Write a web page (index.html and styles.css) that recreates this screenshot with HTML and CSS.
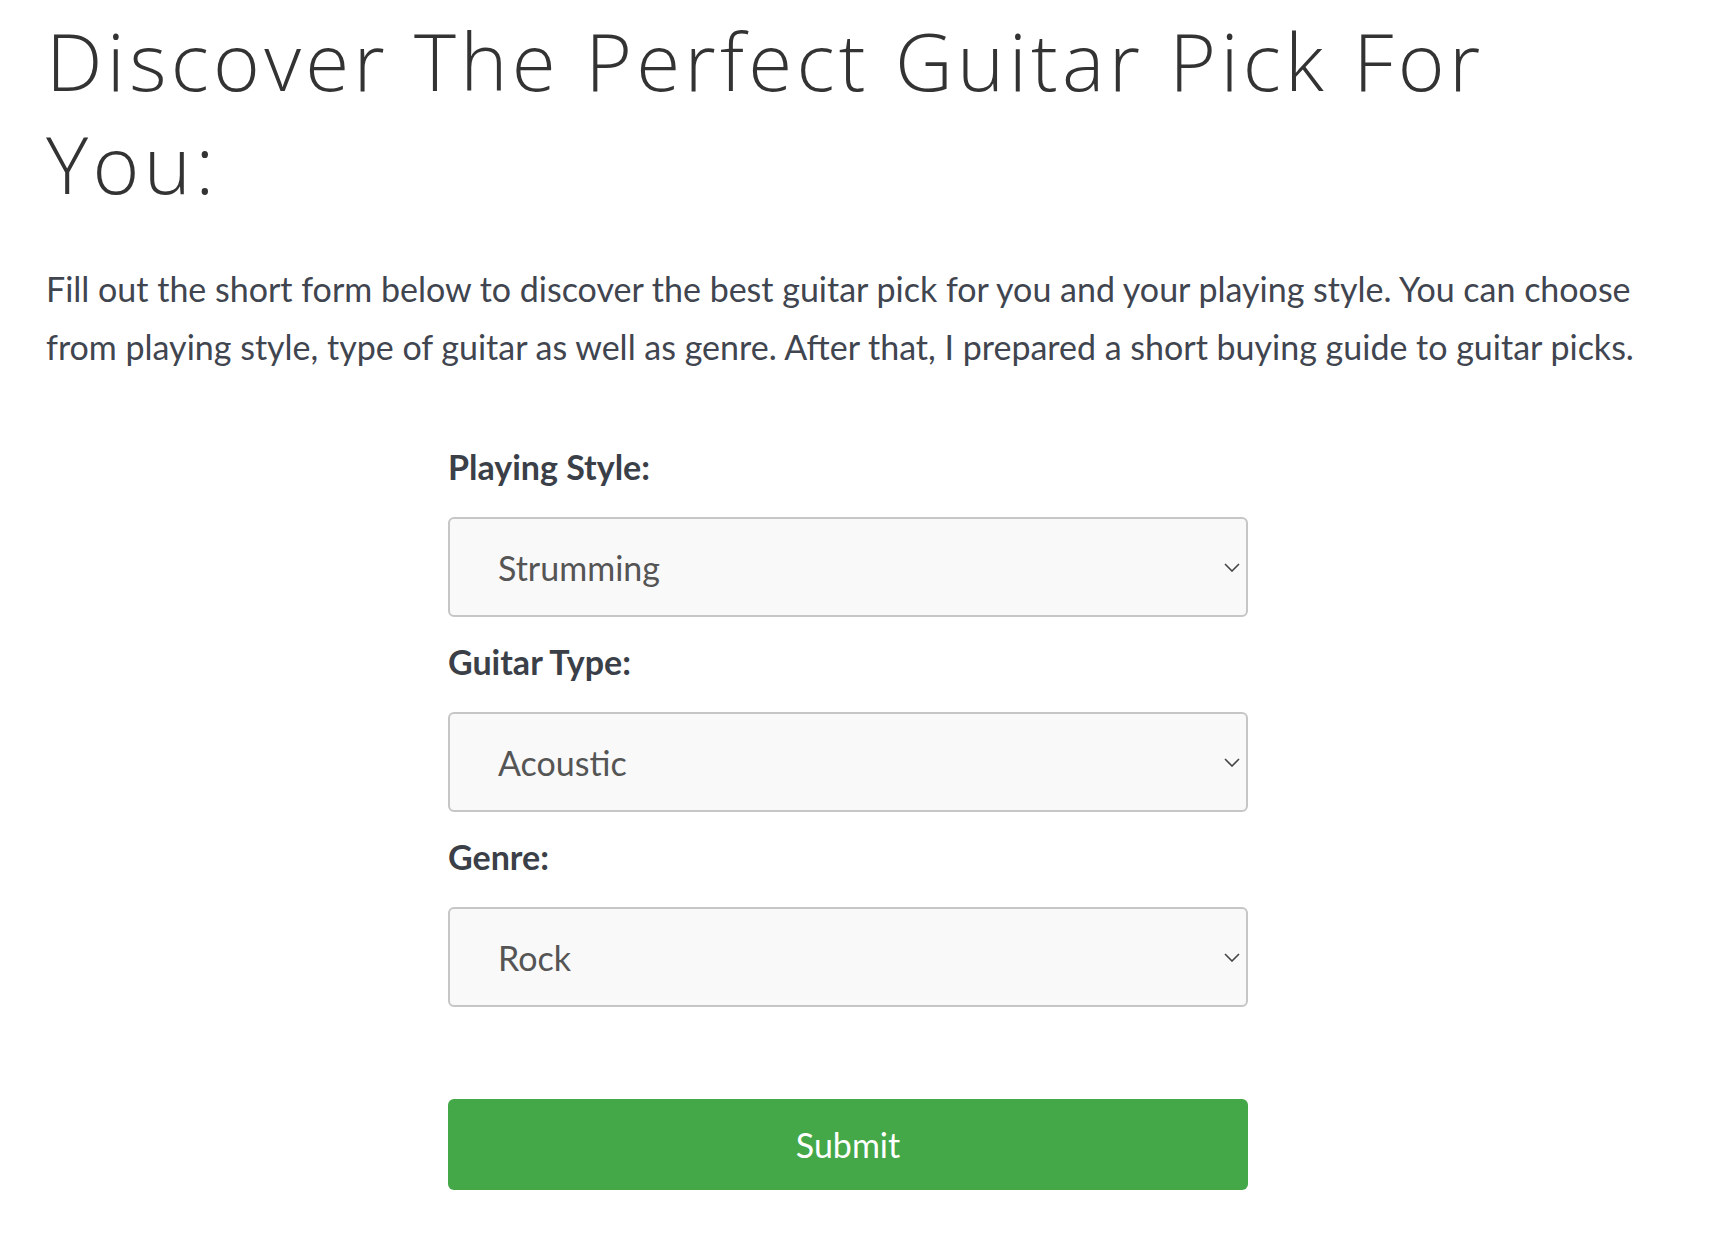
FILE: index.html
```html
<html>
    <head>
        <title>Guitar Pick Finder</title>
        <link rel="stylesheet" href="styles.css">
    </head>
    <body>
        <div id="page">
            <h1 class="title">Discover The Perfect Guitar Pick For You:</h1>
            <p class="intro">Fill out the short form below to discover the best guitar pick for you and your playing style. You can choose from playing style, type of guitar as well as genre. After that, I prepared a short buying guide to guitar picks.</p>
            <form class="picker">
                <label class="field-label" for="style">Playing Style:</label>
                <div class="select-wrap">
                    <select id="style" class="field">
                        <option>Strumming</option>
                        <option>Lead</option>
                        <option>Both</option>
                    </select>
                    <svg class="chevron" width="16" height="9" viewBox="0 0 16 9"><path d="M1 1 L8 8 L15 1" fill="none" stroke="#444" stroke-width="1.6"/></svg>
                </div>
                <label class="field-label" for="type">Guitar Type:</label>
                <div class="select-wrap">
                    <select id="type" class="field">
                        <option>Acoustic</option>
                        <option>Electric</option>
                        <option>Bass</option>
                    </select>
                    <svg class="chevron" width="16" height="9" viewBox="0 0 16 9"><path d="M1 1 L8 8 L15 1" fill="none" stroke="#444" stroke-width="1.6"/></svg>
                </div>
                <label class="field-label" for="genre">Genre:</label>
                <div class="select-wrap">
                    <select id="genre" class="field">
                        <option>Rock</option>
                        <option>Metal</option>
                        <option>Jazz</option>
                        <option>Blues</option>
                    </select>
                    <svg class="chevron" width="16" height="9" viewBox="0 0 16 9"><path d="M1 1 L8 8 L15 1" fill="none" stroke="#444" stroke-width="1.6"/></svg>
                </div>
                <button type="button" class="submit">Submit</button>
            </form>
        </div>
    </body>
</html>
```

FILE: styles.css
```css
body {
    margin: 0;
    padding: 0;
    background: #fff;
}
#page {
    width: 1615px;
    padding: 0 46px;
    font-family: Lato, "Liberation Sans", sans-serif;
}
.title {
    margin: 8px 0 0 0;
    font-family: "Open Sans", sans-serif;
    font-weight: 300;
    font-size: 80px;
    letter-spacing: 4.3px;
    line-height: 103px;
    color: #333;
}
.intro {
    margin: 46px 0 0 0;
    font-size: 34px;
    line-height: 58px;
    color: #40454f;
}
.picker {
    width: 800px;
    margin: 66px 0 0 402px;
}
.field-label {
    display: block;
    font-size: 34px;
    font-weight: bold;
    line-height: 50px;
    color: #3a3f48;
    margin-bottom: 25px;
}
.select-wrap {
    position: relative;
    margin-bottom: 20px;
}
.field {
    display: block;
    width: 100%;
    height: 100px;
    margin: 0;
    padding: 0 40px 0 48px;
    box-sizing: border-box;
    border: 2px solid #c6c6c6;
    border-radius: 6px;
    background: #f9f9f9;
    font-family: Lato, "Liberation Sans", sans-serif;
    font-size: 34px;
    color: #555;
    appearance: none;
    -webkit-appearance: none;
}
.chevron {
    position: absolute;
    right: 8px;
    top: 46px;
    pointer-events: none;
}
.submit {
    display: block;
    width: 100%;
    height: 91px;
    margin-top: 92px;
    border: none;
    border-radius: 6px;
    background: #44a848;
    color: #fff;
    font-family: Lato, "Liberation Sans", sans-serif;
    font-size: 34px;
}
```
